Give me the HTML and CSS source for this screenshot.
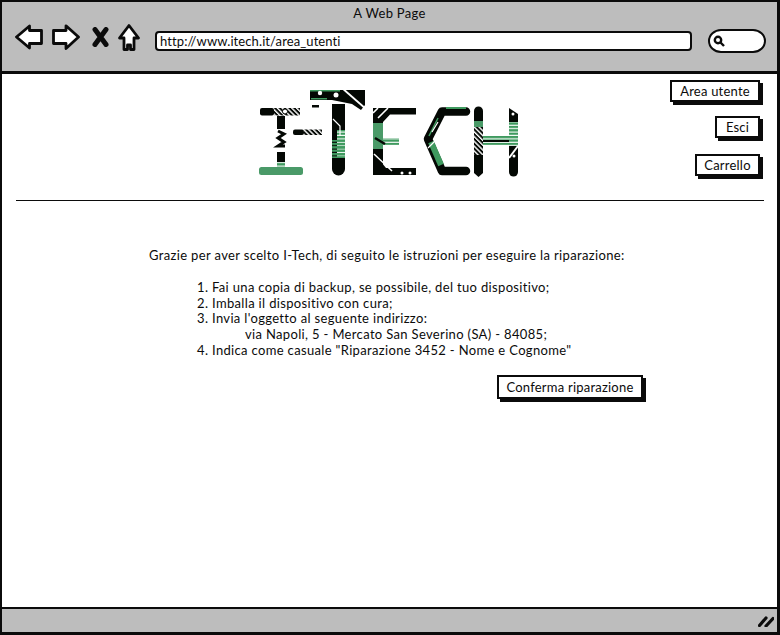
FILE: index.html
```html
<!DOCTYPE html>
<html lang="it">
<head>
<meta charset="utf-8">
<title>A Web Page</title>
<link rel="stylesheet" href="styles.css">
</head>
<body>
<div class="window">
  <header class="chrome">
    <div class="chrome-title">A Web Page</div>
    <div class="toolbar">
      <svg class="ico ico-back" viewBox="0 0 28 26"><path d="M1.500 13 14.500 2V6.500H26.500V19.500H14.500V24Z"/></svg>
      <svg class="ico ico-fwd" viewBox="0 0 28 26"><path d="M1.500 6.500H14V1.800L26.500 13 14 24.500V19.500H1.500Z"/></svg>
      <svg class="ico ico-x" viewBox="0 0 17 20"><path d="M3 2.500 14 17.500M14 2.500 3 17.500"/></svg>
      <svg class="ico ico-home" viewBox="0 0 22 27"><path d="M11 1.500 20.500 14H16V25.500H12.500V21H9.500V25.500H6V14H1.500Z"/></svg>
      <div class="url">http://www.itech.it/area_utenti</div>
      <div class="search">
        <svg class="ico-lens" viewBox="0 0 12 12"><circle cx="5" cy="5" r="3.200"/><path d="M7.500 7.500 11 11"/></svg>
      </div>
    </div>
  </header>

  <main class="page">
    <div class="masthead">
      <span></span>
      <svg class="logo" viewBox="250 80 280 110" role="img" aria-label="I-Tech">
        <defs>
          <pattern id="stripes" width="6" height="3.400" patternUnits="userSpaceOnUse">
            <rect width="6" height="2.300" fill="#3f9a5f"/>
          </pattern>
          <pattern id="hatch" width="3.400" height="3.400" patternUnits="userSpaceOnUse" patternTransform="rotate(45)">
            <rect width="3.400" height="2" fill="#040804"/>
          </pattern>
        </defs>
        <!-- I -->
        <rect x="260" y="108" width="14" height="7.500" rx="2" fill="#040804"/>
        <rect x="274" y="108" width="26" height="7.500" fill="url(#hatch)"/>
        <circle cx="285" cy="111.500" r="2.500" fill="#fff" stroke="#040804"/>
        <rect x="277" y="116" width="8" height="13" fill="#040804"/>
        <path d="M278 131 284 134 278 138 284 142 278 146H285" fill="none" stroke="#040804" stroke-width="3"/>
        <rect x="277" y="152" width="8" height="10" fill="#040804"/>
        <rect x="277" y="162" width="8" height="5" fill="url(#stripes)"/>
        <rect x="259" y="167" width="44" height="8" rx="2.500" fill="#4a9a68"/>
        <!-- hyphen -->
        <rect x="293" y="129.500" width="11" height="5.500" rx="2" fill="#040804"/>
        <rect x="304" y="129.500" width="18" height="5.500" fill="url(#hatch)"/>
        <!-- T -->
        <path d="M310 90H365V105L361 110 352 104 332 100H310Z" fill="#040804"/>
        <path d="M310 90H340V91.500H310Z" fill="#3f9a5f"/>
        <path d="M342 88 366 109" stroke="#fff" stroke-width="1.800"/>
        <circle cx="320" cy="93" r="2.200" fill="#fff"/><circle cx="336" cy="95" r="2.500" fill="#fff"/>
        <rect x="311" y="98" width="16" height="1.500" fill="#3f9a5f"/>
        <rect x="312" y="105" width="7" height="2.500" fill="#040804"/>
        <path d="M332 104H345V169A6.500 6.500 0 0 1 332 169Z" fill="#040804"/>
        <rect x="337" y="130" width="8" height="28" fill="#fff"/>
        <rect x="337" y="130" width="8" height="28" fill="url(#stripes)"/>
        <rect x="332" y="140" width="13" height="18" fill="url(#stripes)"/>
        <path d="M333 119 340 126V136" fill="none" stroke="#fff" stroke-width="1.200"/>
        <!-- E -->
        <path d="M373 108H416V114.500H390L383 122V175H373Z" fill="#040804"/>
        <path d="M378 108 373 113M388 108 378 118" stroke="#fff" stroke-width="1.600"/>
        <rect x="373" y="123" width="10" height="26" fill="#4a9a68"/>
        <rect x="383" y="138" width="16" height="7" fill="url(#stripes)"/>
        <path d="M375 138 385 144" stroke="#040804" stroke-width="2.500"/>
        <path d="M373 152 386 168H416V175H373Z" fill="#040804"/>
        <path d="M374 154 392 171" stroke="#fff" stroke-width="1.500"/>
        <circle cx="402" cy="173" r="1.500" fill="#fff"/><circle cx="410" cy="173" r="1.500" fill="#fff"/>
        <!-- C -->
        <path d="M466 111.500H442L428 139 442 171H466" fill="none" stroke="#040804" stroke-width="8.500" stroke-linecap="round" stroke-linejoin="round"/>
        <path d="M446 108H466" stroke="#3f9a5f" stroke-width="2"/>
        <path d="M431 142 441 165" stroke="#3f9a5f" stroke-width="6"/>
        <path d="M429 136 438 118" stroke="#3f9a5f" stroke-width="1.500"/>
        <path d="M436 140 428 148M438 122 432 132" stroke="#fff" stroke-width="1.200"/>
        <!-- H -->
        <path d="M474 111A4.500 4.500 0 0 1 483 111V173L478.500 177 474 173Z" fill="#040804"/>
        <rect x="474" y="121" width="9" height="6" fill="#4a9a68"/>
        <rect x="474" y="127" width="9" height="28" fill="#fff"/>
        <rect x="474" y="127" width="9" height="28" fill="url(#hatch)"/>
        <rect x="483" y="136" width="26" height="9" fill="url(#stripes)"/>
        <rect x="483" y="140" width="26" height="2" fill="#040804"/>
        <path d="M509 108 518 114V172A4.500 4.500 0 0 1 509 172Z" fill="#040804"/>
        <rect x="509" y="122" width="9" height="24" fill="#fff"/>
        <rect x="509" y="122" width="9" height="24" fill="url(#stripes)"/>
        <path d="M509 158 518 146" stroke="#fff" stroke-width="2"/>
        <circle cx="513" cy="114" r="1.500" fill="#fff"/><circle cx="514" cy="156" r="1.500" fill="#fff"/>
      </svg>
      <nav class="actions">
        <button class="btn btn-area">Area utente</button>
        <button class="btn btn-esci">Esci</button>
        <button class="btn btn-carrello">Carrello</button>
      </nav>
    </div>
    <hr class="rule">
    <p class="lead">Grazie per aver scelto I-Tech, di seguito le istruzioni per eseguire la riparazione:</p>
    <ol class="steps">
      <li>Fai una copia di backup, se possibile, del tuo dispositivo;</li>
      <li>Imballa il dispositivo con cura;</li>
      <li>Invia l'oggetto al seguente indirizzo:
        <div class="address">via Napoli, 5 - Mercato San Severino (SA) - 84085;</div>
      </li>
      <li>Indica come casuale "Riparazione 3452 - Nome e Cognome"</li>
    </ol>
    <div class="confirm-row">
      <button class="btn btn-confirm">Conferma riparazione</button>
    </div>
  </main>

  <footer class="status">
    <svg class="grip" viewBox="0 0 16 12"><path d="M1.500 10.500 8 3M8 11 15 3.500"/></svg>
  </footer>
</div>
</body>
</html>
```
FILE: styles.css
```css
* { box-sizing: border-box; }
html, body { margin: 0; height: 100%; background: #fff; }
body {
  font-family: "Lato", "Open Sans", sans-serif;
  font-size: 13px;
  color: #0b0b0b;
}
.window {
  width: 780px;
  height: 635px;
  border: 2px solid #0b0b0b;
  border-right-width: 3px;
  border-bottom-width: 3px;
  display: flex;
  flex-direction: column;
  overflow: hidden;
}
.chrome {
  height: 72px;
  flex: none;
  background: #bdbdbd;
  border-bottom: 3px solid #0b0b0b;
}
.chrome-title {
  text-align: center;
  height: 22px;
  padding-top: 3px;
  line-height: 17px;
  font-size: 13px;
  letter-spacing: 0.3px;
}
.toolbar {
  display: flex;
  align-items: center;
  height: 26px;
  padding: 0 11px 0 13px;
}
.ico { flex: none; display: block; }
.ico path { fill: #fff; stroke: #0b0b0b; stroke-width: 2.800; stroke-linejoin: round; }
.ico-back { width: 28px; height: 26px; }
.ico-fwd { width: 28px; height: 26px; margin-left: 9px; }
.ico-x { width: 17px; height: 20px; margin-left: 12px; }
.ico-x path { stroke-width: 5; fill: none; stroke-linecap: round; }
.ico-home { width: 22px; height: 27px; margin-left: 9px; }
.url {
  flex: 1;
  height: 20px;
  margin: 8px 0 0 15px;
  padding-left: 3px;
  background: #fff;
  border: 2px solid #0b0b0b;
  border-radius: 4px;
  font-size: 13px;
  line-height: 16px;
  letter-spacing: 0.1px;
  white-space: nowrap;
}
.search {
  flex: none;
  width: 58px;
  height: 24px;
  margin: 8px 0 0 16px;
  background: #fff;
  border: 2.500px solid #0b0b0b;
  border-radius: 13px / 12px;
  display: flex;
  align-items: center;
  padding-left: 3px;
}
.ico-lens { width: 12px; height: 12px; }
.ico-lens circle, .ico-lens path { fill: none; stroke: #0b0b0b; stroke-width: 2.400; }
.page { flex: 1; min-height: 0; background: #fff; }
.masthead {
  display: grid;
  grid-template-columns: 1fr 280px 1fr;
  height: 126px;
  padding: 6px 17px 0 14px;
}
.logo { width: 280px; height: 110px; display: block; margin-left: 2px; }
.actions {
  display: flex;
  flex-direction: column;
  align-items: flex-end;
  gap: 14px;
}
.btn {
  font: inherit;
  font-size: 13px;
  letter-spacing: 0.22px;
  height: 22px;
  padding: 0;
  line-height: 18px;
  color: #0b0b0b;
  background: #fff;
  border: 2px solid #0b0b0b;
  border-radius: 0;
  box-shadow: 3px 3px 0 #0b0b0b;
  white-space: nowrap;
}
.btn-area { width: 90px; }
.btn-esci { width: 45px; }
.btn-carrello { width: 65px; margin-top: 2px; }
.rule {
  height: 1px;
  margin: 0 13px 0 14px;
  border: 0;
  background: #0b0b0b;
}
.lead {
  margin: 46px 0 0 147px;
  line-height: 16px;
  letter-spacing: 0.35px;
  white-space: nowrap;
}
.steps {
  margin: 17px 0 0;
  padding: 0 0 0 210px;
  line-height: 15.700px;
  letter-spacing: 0.34px;
}
.address { margin-left: 33px; }
.confirm-row {
  display: flex;
  justify-content: flex-start;
  margin: 16px 0 0 495px;
}
.btn-confirm { width: 146px; height: 24px; }
.status {
  height: 25px;
  flex: none;
  margin-top: auto;
  background: #bdbdbd;
  border-top: 2px solid #0b0b0b;
  display: flex;
  justify-content: flex-end;
  align-items: center;
  padding-right: 3px;
}
.grip { width: 16px; height: 12px; }
.grip path { fill: none; stroke: #0b0b0b; stroke-width: 3.200; stroke-linecap: round; }
```
